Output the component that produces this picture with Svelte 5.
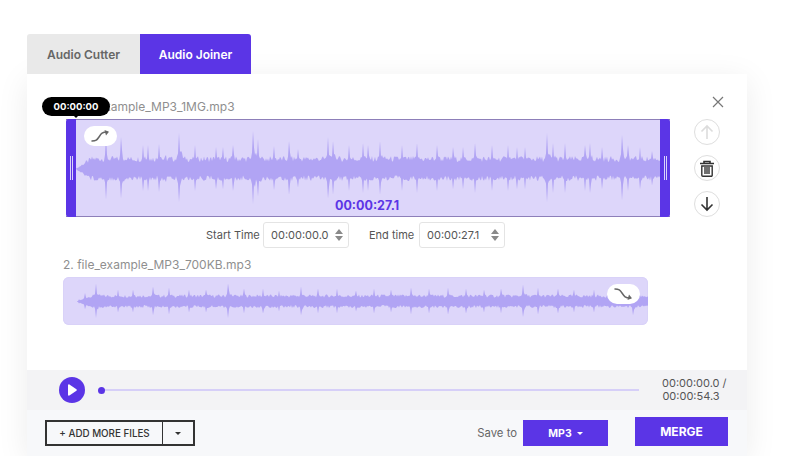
<script>
    // spike positions (px from the left of each wave) and their height, read off the screenshot
    const peaksOne = [[30,33],[45,32],[67,24],[72,24],[83,25],[90,14],[103,36],[119,24],[140,22],[147,22],[157,24],[177,38],[182,30],[198,23],[213,28],[222,20],[252,32],[257,28],[273,24],[287,26],[292,24],[304,28],[326,24],[341,26],[361,24],[377,22],[387,22],[399,26],[416,24],[432,24],[441,22],[449,22],[471,36],[477,26],[489,26],[509,24],[514,26],[526,22],[546,34],[552,24],[564,22],[576,18]];
    const peaksTwo = [[16,14],[22,16],[33,18],[55,12],[70,12],[90,15],[106,14],[126,12],[143,12],[165,18],[181,13],[200,13],[216,11],[238,15],[255,13],[274,13],[293,11],[311,13],[328,12],[348,14],[366,13],[385,14],[403,13],[421,12],[438,13],[460,17],[475,14],[495,13],[511,12],[531,12],[570,15]];

    // small seeded generator so the wave is the same on every load
    function jitter(i) {
        const s = Math.sin(i * 12.9898) * 43758.5453;
        return s - Math.floor(s);
    }

    function envelope(peaks, x, base, seed) {
        let h = base * (0.7 + jitter(x + seed) * 0.6);
        for (const [p, size] of peaks) {
            const d = x - p;
            const spike = size * Math.exp(-Math.abs(d) / 1.2);
            const tail = d > 0 ? size * 0.62 * Math.exp(-d / 7) : size * 0.45 * Math.exp(d / 3);
            h = Math.max(h, spike, tail * (0.55 + jitter(x + seed + 50) * 0.6));
        }
        return h;
    }

    function wavePath(peaks, width, mid, base, startAt) {
        const top = [];
        const bottom = [];
        for (let x = startAt; x <= width; x++) {
            // fade in from the silent start of the track
            const fade = Math.min(1, (x - startAt) / 16 + 0.03);
            const up = envelope(peaks, x, base, 0) * fade;
            const down = envelope(peaks, x, base, 300) * fade * 0.92;
            top.push(`${x},${(mid - up).toFixed(1)}`);
            bottom.unshift(`${x},${(mid + down).toFixed(1)}`);
        }
        return top.concat(bottom).join(" ");
    }

    const waveOne = wavePath(peaksOne, 584, 49, 10, 0);
    const waveTwo = wavePath(peaksTwo, 585, 24.5, 5.5, 14);
</script>

<div class="page">
    <div class="tabs">
        <div class="tab">Audio Cutter</div>
        <div class="tab active">Audio Joiner</div>
    </div>

    <div class="card">
        <div class="editor">
            <div class="tracks">
                <div class="file-name">1. file_example_MP3_1MG.mp3</div>
                <div class="tooltip">00:00:00</div>
                <div class="wave selected">
                    <div class="handle left"><i></i></div>
                    <div class="wave-area">
                        <svg width="584" height="96" viewBox="0 0 584 96">
                            <polygon points={waveOne} fill="#b1a4f4" />
                        </svg>
                        <div class="fade-pill pill-one">
                            <svg width="22" height="14" viewBox="0 0 22 14">
                                <path d="M2 12c4 0 5-1 7-4s3-5 8-5" fill="none" stroke="#666" stroke-width="1.5" stroke-linecap="round" />
                                <path d="M14.5 1 19 2.8 16 6.5z" fill="#666" />
                            </svg>
                        </div>
                        <div class="duration">00:00:27.1</div>
                    </div>
                    <div class="handle right"><i></i></div>
                </div>

                <div class="time-row">
                    <span class="time-label">Start Time</span>
                    <div class="time-input">
                        00:00:00.0
                        <svg width="8" height="12" viewBox="0 0 8 12"><path d="M4 0 8 5H0zM4 12 0 7h8z" fill="#8a8a8a" /></svg>
                    </div>
                    <span class="time-label end">End time</span>
                    <div class="time-input">
                        00:00:27.1
                        <svg width="8" height="12" viewBox="0 0 8 12"><path d="M4 0 8 5H0zM4 12 0 7h8z" fill="#8a8a8a" /></svg>
                    </div>
                </div>

                <div class="file-name second">2. file_example_MP3_700KB.mp3</div>
                <div class="wave plain">
                    <svg width="585" height="48" viewBox="0 0 585 48">
                        <polygon points={waveTwo} fill="#b1a4f4" />
                    </svg>
                    <div class="fade-pill pill-two">
                        <svg width="22" height="14" viewBox="0 0 22 14">
                            <path d="M2 2c4 0 5 1 7 4s3 5 8 5" fill="none" stroke="#666" stroke-width="1.5" stroke-linecap="round" />
                            <path d="M14.5 13 19 11.2 16 7.5z" fill="#666" />
                        </svg>
                    </div>
                </div>
            </div>

            <div class="side">
                <svg class="close" width="12" height="12" viewBox="0 0 12 12">
                    <path d="M1 1l10 10M11 1 1 11" stroke="#777" stroke-width="1.2" fill="none" />
                </svg>
                <button class="round off" aria-label="Move up">
                    <svg width="14" height="16" viewBox="0 0 14 16"><path d="M7 15V2M1.5 7.5 7 2l5.5 5.5" fill="none" stroke="#dcdcdc" stroke-width="1.6" /></svg>
                </button>
                <button class="round" aria-label="Delete">
                    <svg width="16" height="17" viewBox="0 0 16 17">
                        <path d="M1 3.5h14M5 3.5V1.5h6v2" fill="none" stroke="#333" stroke-width="1.6" />
                        <path d="M2.8 6h10.4v9.2a1 1 0 0 1-1 1H3.8a1 1 0 0 1-1-1zM6 7v7M8 7v7M10 7v7" fill="none" stroke="#333" stroke-width="1.4" />
                    </svg>
                </button>
                <button class="round" aria-label="Move down">
                    <svg width="14" height="16" viewBox="0 0 14 16"><path d="M7 1v13M1.5 8.5 7 14l5.5-5.5" fill="none" stroke="#333" stroke-width="1.6" /></svg>
                </button>
            </div>
        </div>

        <div class="player">
            <div class="play">
                <svg width="10" height="12" viewBox="0 0 10 12"><path d="M1 1.2c0-.8.8-1.2 1.4-.8l7 4.8c.5.4.5 1.2 0 1.6l-7 4.8c-.6.4-1.4 0-1.4-.8z" fill="#fff" /></svg>
            </div>
            <div class="track-line"><span class="dot"></span></div>
            <div class="clock">00:00:00.0 /<br />00:00:54.3</div>
        </div>

        <div class="footer">
            <div class="add-files">
                <span class="add-main">+ ADD MORE FILES</span>
                <span class="add-arrow"><i class="caret dark"></i></span>
            </div>
            <span class="save-label">Save to</span>
            <div class="format">MP3 <i class="caret"></i></div>
            <div class="merge">MERGE</div>
        </div>
    </div>
</div>

<style>
    :global(body) {
        background: #fff;
        font-family: Inter, "Open Sans", sans-serif;
    }
    .page {
        width: 720px;
        padding: 34px 0 0 27px;
    }
    .tabs {
        display: flex;
        height: 40px;
    }
    .tab {
        width: 113px;
        display: flex;
        align-items: center;
        justify-content: center;
        background: #e9e9e9;
        color: #666;
        font-size: 12px;
        font-weight: 600;
        border-radius: 3px 0 0 0;
    }
    .tab.active {
        width: 111px;
        background: #5b35e6;
        color: #fff;
        border-radius: 0 3px 0 0;
    }
    .card {
        background: #fff;
        box-shadow: 0 6px 30px rgba(0, 0, 0, 0.08);
    }
    .editor {
        height: 296px;
        box-sizing: border-box;
        padding: 22px 0 0 36px;
        display: flex;
        gap: 24px;
    }
    .tracks {
        width: 607px;
        position: relative;
    }
    .file-name {
        height: 20px;
        line-height: 22px;
        font-size: 12px;
        color: #8f8f8f;
        margin-bottom: 3px;
    }
    .file-name.second {
        margin-top: 6px;
    }
    .tooltip {
        position: absolute;
        left: -21px;
        top: 1px;
        width: 68px;
        height: 19px;
        line-height: 19px;
        border-radius: 10px;
        background: #000;
        color: #fff;
        font-size: 9.5px;
        font-weight: 700;
        text-align: center;
    }
    .tooltip::after {
        content: "";
        position: absolute;
        left: 31px;
        top: 18px;
        border: 3px solid transparent;
        border-top-color: #000;
    }
    .wave {
        background: #ddd6fa;
        position: relative;
    }
    .wave.selected {
        margin-left: 3px;
        width: 604px;
        height: 98px;
        display: flex;
        box-sizing: border-box;
        border-top: 1px solid #8d7fb9;
        border-bottom: 1px solid #8d7fb9;
    }
    .wave.plain {
        width: 585px;
        height: 48px;
        border-radius: 6px;
        box-sizing: border-box;
        overflow: hidden;
        box-shadow: inset 0 0 0 1px #d9d2f8;
    }
    .wave svg {
        display: block;
    }
    .wave-area {
        width: 584px;
        position: relative;
    }
    .handle {
        width: 10px;
        margin: -1px 0;
        background: #5b35e6;
        display: flex;
        align-items: center;
        justify-content: center;
    }
    .handle.left {
        border-radius: 3px 0 0 3px;
    }
    .handle.right {
        border-radius: 0 3px 3px 0;
    }
    .handle i {
        width: 1px;
        height: 24px;
        border-left: 1px solid #d9d2fb;
        border-right: 1px solid #d9d2fb;
    }
    .fade-pill {
        position: absolute;
        width: 33px;
        height: 20px;
        background: #fff;
        border-radius: 10px;
        display: flex;
        align-items: center;
        justify-content: center;
    }
    .pill-one {
        left: 8px;
        top: 6px;
    }
    .pill-two {
        left: 544px;
        top: 7px;
    }
    .duration {
        position: absolute;
        left: 259px;
        bottom: 3px;
        color: #5b35e6;
        font-size: 12.5px;
        font-weight: 700;
    }
    .time-row {
        margin-top: 5px;
        padding-left: 143px;
        display: flex;
        align-items: center;
        height: 26px;
    }
    .time-label {
        width: 57px;
        font-size: 11px;
        color: #555;
    }
    .time-label.end {
        width: 50px;
        margin-left: 20px;
    }
    .time-input {
        width: 86px;
        height: 26px;
        box-sizing: border-box;
        padding: 0 5px 0 7px;
        border: 1px solid #e4e4e4;
        border-radius: 3px;
        display: flex;
        align-items: center;
        justify-content: space-between;
        font-size: 11px;
        color: #555;
    }
    .side {
        width: 30px;
        display: flex;
        flex-direction: column;
        align-items: flex-start;
        gap: 10px;
    }
    .close {
        align-self: flex-end;
        margin-bottom: 1px;
    }
    .round {
        width: 26px;
        height: 26px;
        padding: 0;
        border-radius: 50%;
        border: 1px solid #dedede;
        background: #fff;
        display: flex;
        align-items: center;
        justify-content: center;
    }
    .player {
        height: 40px;
        background: #f3f3f5;
        display: flex;
        align-items: center;
        padding: 0 27px 0 32px;
    }
    .play {
        width: 26px;
        height: 26px;
        border-radius: 50%;
        background: #5b35e6;
        display: flex;
        align-items: center;
        justify-content: center;
    }
    .track-line {
        flex: 1;
        height: 2px;
        margin: 0 23px 0 14px;
        background: #d6cff8;
        position: relative;
    }
    .dot {
        position: absolute;
        left: -1px;
        top: -2.5px;
        width: 7px;
        height: 7px;
        border-radius: 50%;
        background: #5b35e6;
    }
    .clock {
        width: 58px;
        font-size: 11px;
        line-height: 13px;
        color: #555;
        text-align: center;
        white-space: nowrap;
    }
    .footer {
        height: 46px;
        background: #f7f8fa;
        display: flex;
        align-items: center;
        padding: 0 19px 0 18px;
    }
    .add-files {
        display: flex;
        height: 26px;
        box-sizing: border-box;
        border: 2px solid #333;
        color: #333;
        font-size: 9.8px;
        font-weight: 500;
        margin-right: auto;
    }
    .add-main {
        width: 115px;
        display: flex;
        align-items: center;
        justify-content: center;
        border-right: 1px solid #333;
    }
    .add-arrow {
        width: 30px;
        display: flex;
        align-items: center;
        justify-content: center;
    }
    .caret {
        display: inline-block;
        border: 3px solid transparent;
        border-top-color: #fff;
        border-bottom-width: 0;
        vertical-align: middle;
    }
    .caret.dark {
        border-top-color: #333;
    }
    .save-label {
        font-size: 11.3px;
        color: #666;
        margin-right: 6px;
    }
    .format {
        width: 85px;
        height: 26px;
        background: #5b35e6;
        color: #fff;
        font-size: 10.5px;
        font-weight: 700;
        display: flex;
        align-items: center;
        justify-content: center;
        gap: 5px;
        margin-right: 27px;
    }
    .merge {
        width: 93px;
        height: 29px;
        margin-top: -3px;
        background: #5b35e6;
        color: #fff;
        font-size: 12px;
        font-weight: 700;
        display: flex;
        align-items: center;
        justify-content: center;
    }
</style>
